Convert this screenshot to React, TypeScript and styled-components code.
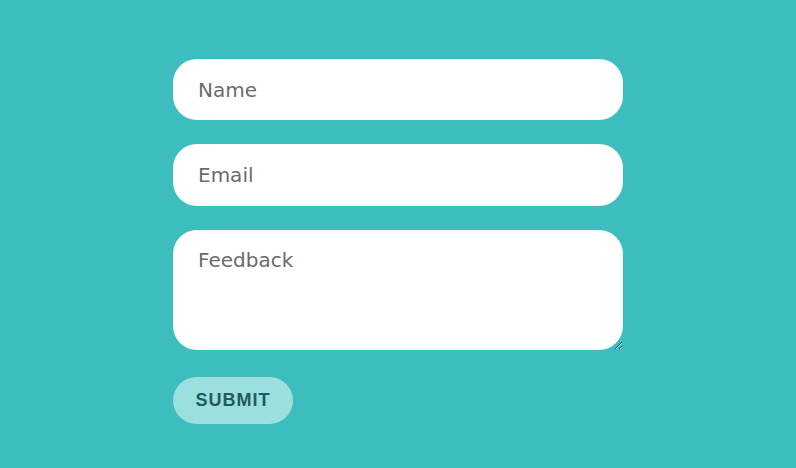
import React from "react";
import styled, { createGlobalStyle } from "styled-components";

const Global = createGlobalStyle`
  html, body { margin: 0; padding: 0; background: #3dbdbd; }
  body { font-family: "DejaVu Sans", sans-serif; }
`;

const Page = styled.div`
  width: 796px;
  height: 468px;
  background: #3dbdbd;
  display: flex;
  justify-content: center;
  padding-top: 58.5px;
  box-sizing: border-box;
`;

const Form = styled.form`
  width: 450px;
  display: flex;
  flex-direction: column;
  align-items: flex-start;
`;

const fieldBase = `
  width: 450px;
  box-sizing: border-box;
  border: none;
  outline: none;
  background: #ffffff;
  border-radius: 24px;
  font-family: "DejaVu Sans", sans-serif;
  font-size: 20px;
  color: #555;
  padding: 0 25px;
  margin: 0;
  &::placeholder { color: #6b6b6b; opacity: 1; }
`;

const Input = styled.input`
  ${fieldBase}
  height: 61.5px;
  padding-top: 1px;
  margin-bottom: 24px;
`;

const TextArea = styled.textarea`
  ${fieldBase}
  height: 120px;
  padding-top: 18px;
  margin-bottom: 27px;
  resize: vertical;
  display: block;
`;

const Submit = styled.button`
  width: 120px;
  height: 47px;
  border: none;
  border-radius: 24px;
  background: #9cdfdf;
  color: #1d5c61;
  font-family: "Liberation Sans", Arial, sans-serif;
  font-weight: 700;
  font-size: 18px;
  letter-spacing: 1px;
  cursor: pointer;
  padding: 0;
`;

export default function App() {
  return (
    <>
      <Global />
      <Page>
        <Form onSubmit={(e) => e.preventDefault()}>
          <Input type="text" placeholder="Name" />
          <Input type="email" placeholder="Email" />
          <TextArea placeholder="Feedback" />
          <Submit type="submit">SUBMIT</Submit>
        </Form>
      </Page>
    </>
  );
}
